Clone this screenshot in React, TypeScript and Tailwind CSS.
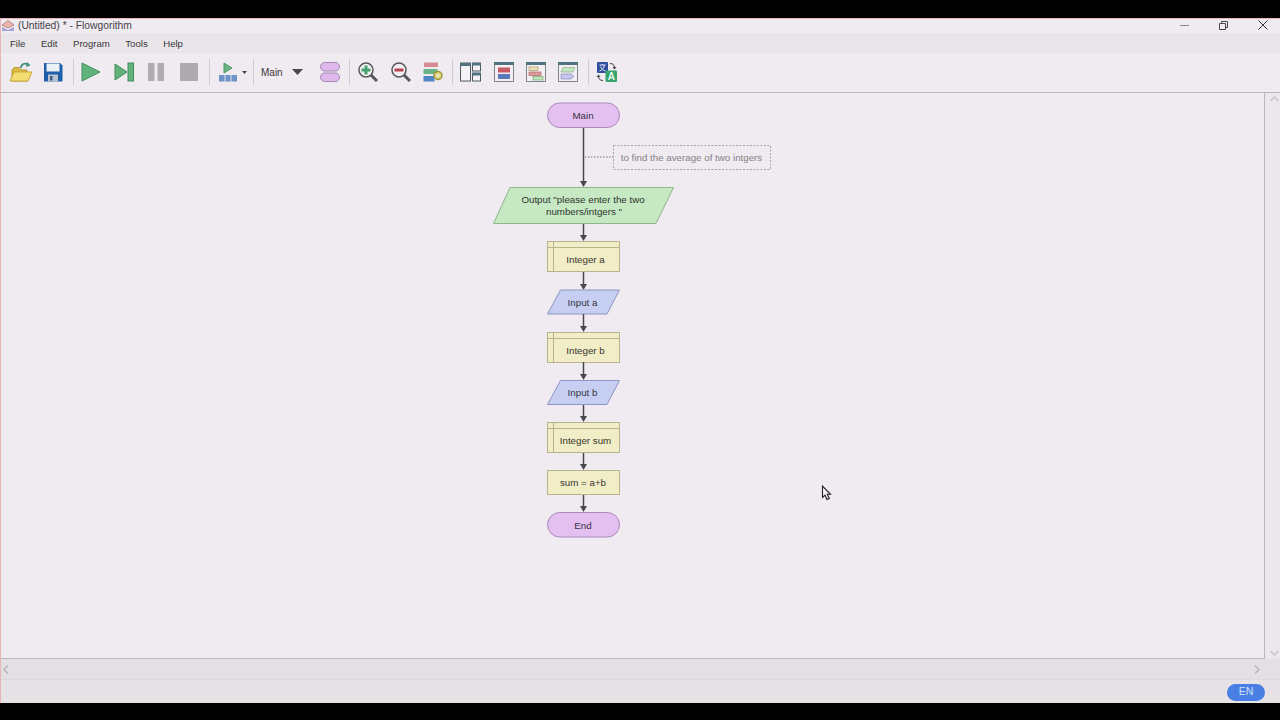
import React from 'react';

const chartFont = "font-['Liberation_Sans',sans-serif]";

function Sep({ className = '' }: { className?: string }) {
  return <div className={`w-px h-[26px] bg-[#d0ccd0] ${className}`} />;
}

function Btn({ children, className = '' }: { children: React.ReactNode; className?: string }) {
  return <div className={`w-8 h-8 flex items-center justify-center shrink-0 ${className}`}>{children}</div>;
}

function Toolbar() {
  return (
    <div className="h-[40px] shrink-0 flex items-center pl-[4px] pb-px border-b border-[#b9b5ba] bg-[#f0ebf0]">
      <Btn>
        <svg width="24" height="22" viewBox="0 0 24 22">
          <path d="M3 9V20H18V9H12L10 6.500H5Z" fill="#d9b93f" stroke="#b6982c" />
          <path d="M1 20L5 11H23L19 20Z" fill="#f3dc72" stroke="#c9a93a" />
          <path d="M12 7C12 3 16 1.500 19 3.500" fill="none" stroke="#3e8f7a" strokeWidth="1.800" />
          <path d="M18 1L21.500 4.500L17 6Z" fill="#3e8f7a" />
        </svg>
      </Btn>
      <Btn>
        <svg width="20" height="20" viewBox="0 0 20 20">
          <path d="M1 1H17L19.500 3.500V19.500H1Z" fill="#1f5ea8" />
          <rect x="3.500" y="1.500" width="13" height="8" fill="#eaf0f6" />
          <rect x="5" y="12.500" width="10" height="7" fill="#b9c4d0" />
          <rect x="7" y="14" width="2.500" height="4.500" fill="#3c5a80" />
        </svg>
      </Btn>
      <Sep className="ml-1" />
      <Btn className="ml-px">
        <svg width="20" height="20" viewBox="0 0 20 20">
          <path d="M1 1L19 10L1 19Z" fill="#62b27c" stroke="#3f8f5c" />
        </svg>
      </Btn>
      <Btn className="ml-px">
        <svg width="20" height="20" viewBox="0 0 20 20">
          <path d="M1 2L13 10L1 18Z" fill="#62b27c" stroke="#3f8f5c" />
          <rect x="14" y="1" width="5.500" height="18" fill="#62b27c" stroke="#3f8f5c" />
        </svg>
      </Btn>
      <Btn>
        <svg width="18" height="20" viewBox="0 0 18 20">
          <rect x="1" y="1" width="6.500" height="18" fill="#b0adb0" />
          <rect x="10.500" y="1" width="6.500" height="18" fill="#b0adb0" />
        </svg>
      </Btn>
      <Btn className="ml-px">
        <svg width="18" height="18" viewBox="0 0 18 18">
          <rect x="0" y="0" width="18" height="18" fill="#aeabae" />
        </svg>
      </Btn>
      <Sep className="ml-1" />
      <svg className="ml-2" width="20" height="20" viewBox="0 0 20 20">
        <path d="M6 1L14 6L6 11Z" fill="#6ab582" stroke="#4b9a68" />
        <rect x="1" y="13" width="18" height="6.500" fill="#6f94c9" />
        <path d="M7 13V19.500M13 13V19.500" stroke="#dfe6f0" />
      </svg>
      <svg className="ml-1" width="5" height="3" viewBox="0 0 5 3">
        <path d="M0 0H5L2.500 3Z" fill="#444" />
      </svg>
      <Sep className="ml-[6px]" />
      <span className="ml-[7px] text-[10px] text-[#3a373c]">Main</span>
      <svg className="ml-[9px]" width="11" height="6" viewBox="0 0 11 6">
        <path d="M0 0H11L5.500 6Z" fill="#4a474c" />
      </svg>
      <svg className="ml-[17px]" width="20" height="20" viewBox="0 0 20 20">
        <rect x="0.500" y="0.500" width="19" height="8.500" rx="4.250" fill="#dfb9ec" stroke="#a586b4" />
        <rect x="0.500" y="11" width="19" height="8.500" rx="4.250" fill="#dfb9ec" stroke="#a586b4" />
      </svg>
      <Sep className="ml-[9px]" />
      <Btn className="ml-[2px]">
        <svg width="20" height="20" viewBox="0 0 20 20">
          <path d="M13 13L19 19" stroke="#55585a" strokeWidth="3" />
          <circle cx="8" cy="8" r="7" fill="#f2f0f2" stroke="#55585a" strokeWidth="1.500" />
          <path d="M8 3.500V12.500M3.500 8H12.500" stroke="#45a06e" strokeWidth="3" />
        </svg>
      </Btn>
      <Btn className="ml-px">
        <svg width="20" height="20" viewBox="0 0 20 20">
          <path d="M13 13L19 19" stroke="#55585a" strokeWidth="3" />
          <circle cx="8" cy="8" r="7" fill="#f2f0f2" stroke="#55585a" strokeWidth="1.500" />
          <path d="M3.500 8H12.500" stroke="#b8434f" strokeWidth="3" />
        </svg>
      </Btn>
      <Btn>
        <svg width="20" height="20" viewBox="0 0 20 20">
          <rect x="1" y="0.500" width="14" height="4.500" fill="#d58c92" />
          <rect x="0.500" y="7" width="14" height="5" fill="#68b488" />
          <rect x="0.500" y="14" width="11" height="5.500" fill="#4f86c4" />
          <circle cx="15" cy="13.500" r="4" fill="#e3d675" stroke="#9c9440" strokeWidth="1.500" />
          <circle cx="15" cy="13.500" r="1.300" fill="#f0ebf0" />
        </svg>
      </Btn>
      <Sep className="ml-[3px]" />
      <Btn className="ml-[2px]">
        <svg width="21" height="20" viewBox="0 0 21 20">
          <rect x="0.500" y="1" width="10" height="18" fill="#f5f2f5" stroke="#4e5a62" />
          <rect x="0.500" y="1" width="10" height="3" fill="#4e7482" />
          <rect x="12.500" y="1" width="8" height="8" fill="#f5f2f5" stroke="#4e5a62" />
          <rect x="12.500" y="1" width="8" height="2.500" fill="#4e7482" />
          <rect x="12.500" y="11" width="8" height="8" fill="#f5f2f5" stroke="#4e5a62" />
          <rect x="12.500" y="11" width="8" height="2.500" fill="#4e7482" />
        </svg>
      </Btn>
      <Btn className="ml-px">
        <svg width="20" height="20" viewBox="0 0 20 20">
          <rect x="0.500" y="0.500" width="19" height="19" fill="#f3eff3" stroke="#7d8689" />
          <rect x="0" y="0" width="20" height="3" fill="#4e7482" />
          <rect x="4" y="5.500" width="12" height="5" fill="#c75a62" />
          <rect x="4" y="12" width="12" height="5" fill="#5a78b8" />
        </svg>
      </Btn>
      <Btn>
        <svg width="20" height="20" viewBox="0 0 20 20">
          <rect x="0.500" y="0.500" width="19" height="19" fill="#f3eff3" stroke="#7d8689" />
          <rect x="0" y="0" width="20" height="3" fill="#4e7482" />
          <rect x="3" y="5" width="9" height="3.500" fill="#eee3b8" stroke="#a69a6a" strokeWidth="0.700" />
          <rect x="3" y="10" width="12" height="3.500" fill="#dc9a9a" stroke="#b06a6a" strokeWidth="0.700" />
          <rect x="7" y="14.500" width="10" height="3.500" fill="#bfe3b8" stroke="#7ea878" strokeWidth="0.700" />
        </svg>
      </Btn>
      <Btn>
        <svg width="20" height="20" viewBox="0 0 20 20">
          <rect x="0.500" y="0.500" width="19" height="19" fill="#f3eff3" stroke="#7d8689" />
          <rect x="0" y="0" width="20" height="3" fill="#4e7482" />
          <path d="M5 5.500H17L15 10H3Z" fill="#c3e5bf" stroke="#8ab085" strokeWidth="0.700" />
          <path d="M3 12H13L16 14.500L13 17H3Z" fill="#c5c6ec" stroke="#8a8cc0" strokeWidth="0.700" />
        </svg>
      </Btn>
      <Sep className="ml-1" />
      <Btn className="ml-[2px]">
        <svg width="22" height="22" viewBox="0 0 22 22">
          <rect x="1" y="1" width="11" height="11" rx="1" fill="#2f4f9e" />
          <path d="M3.500 4H9.500M6.500 3V4M8.500 4C8 7 6 9 3.500 10M4.500 5.500C5.500 8 7.500 9.500 9.500 10" fill="none" stroke="#e6ecf6" strokeWidth="1" />
          <rect x="9.500" y="9.500" width="11.500" height="11.500" rx="1" fill="#36a46c" />
          <text x="15.250" y="19" textAnchor="middle" className="text-[10px] font-bold font-['Liberation_Sans',sans-serif]" fill="#e8f6ee">A</text>
          <path d="M14 2.500C17 2.500 18.500 4 18.500 7" fill="none" stroke="#444" strokeWidth="1" />
          <path d="M16.500 6H20.500L18.500 8.500Z" fill="#444" />
          <path d="M7 19.500C4 19.500 2.500 18 2.500 15" fill="none" stroke="#444" strokeWidth="1" />
          <path d="M0.500 16H4.500L2.500 13.500Z" fill="#444" />
        </svg>
      </Btn>
    </div>
  );
}

function Arrow({ from, to }: { from: number; to: number }) {
  return (
    <g>
      <line x1="583.500" y1={from} x2="583.500" y2={to - 4} stroke="#4a4650" strokeWidth="1.500" />
      <path d={`M580 ${to - 6}H587L583.500 ${to}Z`} fill="#4a4650" />
    </g>
  );
}

function Declare({ y, h, label, tx }: { y: number; h: number; label: string; tx: number }) {
  return (
    <g>
      <rect x="547.500" y={y} width="72" height={h} fill="#f1edc6" stroke="#b8b38f" />
      <path d={`M553.500 ${y}V${y + h}M547.500 ${y + 6}H619.500`} stroke="#b8b38f" fill="none" />
      <text x={tx} y={y + 21.500} textAnchor="middle" fill="#38352f">{label}</text>
    </g>
  );
}

function Input({ y, label }: { y: number; label: string }) {
  return (
    <g>
      <path d={`M560.500 ${y}H619.500L607 ${y + 24}H547.500Z`} fill="#c6cef1" stroke="#8d95c2" />
      <text x="582.500" y={y + 15.500} textAnchor="middle" fill="#33353f">{label}</text>
    </g>
  );
}

function Terminal({ y, label }: { y: number; label: string }) {
  return (
    <g>
      <rect x="547.500" y={y} width="72" height="24.500" rx="12.250" fill="#e4c0f1" stroke="#a98bb9" />
      <text x="583" y={y + 16} textAnchor="middle" fill="#37303c">{label}</text>
    </g>
  );
}

function Flowchart() {
  return (
    <svg className={`block w-[1263px] h-[565px] text-[9.750px] ${chartFont}`} viewBox="1 93 1263 565">
      <Terminal y={103} label="Main" />
      <Arrow from={128} to={187} />
      <line x1="585" y1="157" x2="613" y2="157" stroke="#77737c" strokeDasharray="1.500 1.500" />
      <rect x="613.500" y="145.500" width="157" height="24" fill="none" stroke="#a8a4aa" strokeDasharray="2 1.500" />
      <text x="691.500" y="161" textAnchor="middle" fill="#85818a">to find the average of two intgers</text>

      <path d="M510 187.500H673.500L656 223.500H493.500Z" fill="#c6e8c2" stroke="#8fb58b" />
      <text x="583" y="203" textAnchor="middle" fill="#2f362e">Output "please enter the two</text>
      <text x="584" y="214.500" textAnchor="middle" fill="#2f362e">numbers/intgers "</text>
      <Arrow from={224} to={241} />

      <Declare y={241.500} h={30} label="Integer a" tx={585.500} />
      <Arrow from={272} to={290} />
      <Input y={290} label="Input a" />
      <Arrow from={314} to={332} />
      <Declare y={332.500} h={30} label="Integer b" tx={585.500} />
      <Arrow from={362} to={380} />
      <Input y={380.500} label="Input b" />
      <Arrow from={405} to={422} />
      <Declare y={422.500} h={30} label="Integer sum" tx={585.500} />
      <Arrow from={453} to={470} />

      <rect x="547.500" y="470.500" width="72" height="24" fill="#f1edc6" stroke="#b8b38f" />
      <text x="583" y="486" textAnchor="middle" fill="#38352f">sum = a+b</text>
      <Arrow from={495} to={512} />
      <Terminal y={512.500} label="End" />

      <path d="M822.500 486V497.500L825 495.200L827 499.500L829.300 498.500L827.300 494.300H830.500Z" fill="#f5f3f5" stroke="#222" strokeWidth="1.100" />
    </svg>
  );
}

export default function App() {
  return (
    <div className="w-[1280px] h-[720px] bg-black pt-[18px] pb-[17px] font-['Liberation_Sans',sans-serif] overflow-hidden">
      <div className="h-full flex flex-col bg-[#f0ebf0] border-l border-t border-[#e6b5b8]">
        {/* title bar */}
        <div className="h-[14px] flex items-center shrink-0">
          <svg className="ml-px" width="12" height="12" viewBox="0 0 12 12">
            <path d="M6 0.500L12 5L6 8L0 5Z" fill="#e6b9b0" stroke="#b5716f" strokeWidth="0.800" />
            <path d="M0 7L6 10L12 7V11H0Z" fill="#a7a4d6" />
          </svg>
          <span className="ml-1 text-[10.300px] text-[#46434a]">(Untitled) * - Flowgorithm</span>
          <div className="ml-auto pb-[2px] flex items-center text-[#555]">
            <svg width="9" height="1" viewBox="0 0 9 1" className="mr-[30px]">
              <rect width="9" height="1" fill="#8a878c" />
            </svg>
            <svg width="9" height="9" viewBox="0 0 9 9" className="mr-[30px]">
              <path d="M0.500 2.500H6.500V8.500H0.500ZM2.500 2.500V0.500H8.500V6.500H6.500" fill="none" stroke="#4a474c" />
            </svg>
            <svg width="10" height="10" viewBox="0 0 10 10" className="mr-[12px]">
              <path d="M0.500 0.500L9.500 9.500M9.500 0.500L0.500 9.500" stroke="#333" />
            </svg>
          </div>
        </div>
        {/* menu */}
        <div className="h-[20px] pt-[2px] flex items-center pl-[9px] gap-[15.500px] bg-[#e9e5e9] text-[9.600px] text-[#3a373c] shrink-0">
          <span>File</span>
          <span>Edit</span>
          <span>Program</span>
          <span>Tools</span>
          <span>Help</span>
        </div>
        <Toolbar />
        {/* canvas + vertical scrollbar */}
        <div className="h-[566px] shrink-0 flex">
          <div className="w-[1263px] shrink-0 border-b border-[#b9b5ba]">
            <Flowchart />
          </div>
          <div className="flex-1 flex flex-col items-center justify-between pt-[3px] pb-[3px] pl-[3px] bg-[#ece7ec] border-l border-[#b9b5ba]">
            <svg width="9" height="6" viewBox="0 0 9 6">
              <path d="M0.500 5L4.500 1L8.500 5" fill="none" stroke="#c6c3c8" strokeWidth="1.300" />
            </svg>
            <svg width="9" height="6" viewBox="0 0 9 6">
              <path d="M0.500 1L4.500 5L8.500 1" fill="none" stroke="#c6c3c8" strokeWidth="1.300" />
            </svg>
          </div>
        </div>
        {/* horizontal scrollbar */}
        <div className="h-[21px] flex items-center justify-between pl-[2px] pr-[20px] bg-[#e3dfe3] border-b border-[#dcd8dc] shrink-0">
          <svg width="6" height="9" viewBox="0 0 6 9">
            <path d="M5 0.500L1 4.500L5 8.500" fill="none" stroke="#b5b2b8" strokeWidth="1.300" />
          </svg>
          <svg width="6" height="9" viewBox="0 0 6 9">
            <path d="M1 0.500L5 4.500L1 8.500" fill="none" stroke="#b5b2b8" strokeWidth="1.300" />
          </svg>
        </div>
        {/* status bar */}
        <div className="flex-1 flex items-center justify-end pr-[15px] pt-px bg-[#e6e2e6]">
          <div className="w-[38px] h-[17px] rounded-full bg-[#4a80e4] flex items-center justify-center text-[10.500px] text-[#cfe0fa]">
            EN
          </div>
        </div>
      </div>
    </div>
  );
}
